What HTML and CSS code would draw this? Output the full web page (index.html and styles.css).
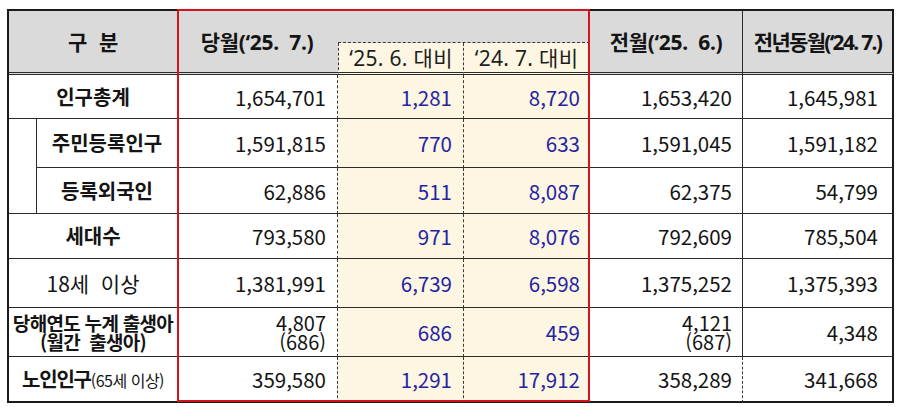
FILE: index.html
```html
<!DOCTYPE html>
<html lang="ko">
<head>
<meta charset="utf-8">
<title>인구 현황</title>
<link rel="stylesheet" href="styles.css">
</head>
<body>
<div class="wrap">
  <table class="stats">
    <colgroup>
      <col class="c-indent">
      <col class="c-label">
      <col class="c-cur">
      <col class="c-d">
      <col class="c-d">
      <col class="c-prev">
      <col class="c-yoy">
    </colgroup>
    <thead>
      <tr class="h1">
        <th colspan="2" rowspan="2" class="gubun">구<span class="sp"></span>분</th>
        <th rowspan="2" class="cur-h">당월(‘25.&nbsp; 7.)</th>
        <th colspan="2" class="blank"></th>
        <th rowspan="2" class="prev-h">전월(‘25.&nbsp; 6.)</th>
        <th rowspan="2" class="yoy-h">전년동월(‘24. 7.)</th>
      </tr>
      <tr class="h2">
        <th class="sub sub1">‘25. 6. 대비</th>
        <th class="sub sub2">‘24. 7. 대비</th>
      </tr>
    </thead>
    <tbody>
      <tr class="r1">
        <td colspan="2" class="label">인구총계</td>
        <td class="num cur">1,654,701</td>
        <td class="num d d1">1,281</td>
        <td class="num d d2">8,720</td>
        <td class="num prev">1,653,420</td>
        <td class="num yoy">1,645,981</td>
      </tr>
      <tr class="r2">
        <td rowspan="2" class="indent"></td>
        <td class="label">주민등록인구</td>
        <td class="num cur">1,591,815</td>
        <td class="num d d1">770</td>
        <td class="num d d2">633</td>
        <td class="num prev">1,591,045</td>
        <td class="num yoy">1,591,182</td>
      </tr>
      <tr class="r3">
        <td class="label">등록외국인</td>
        <td class="num cur">62,886</td>
        <td class="num d d1">511</td>
        <td class="num d d2">8,087</td>
        <td class="num prev">62,375</td>
        <td class="num yoy">54,799</td>
      </tr>
      <tr class="r4">
        <td colspan="2" class="label">세대수</td>
        <td class="num cur">793,580</td>
        <td class="num d d1">971</td>
        <td class="num d d2">8,076</td>
        <td class="num prev">792,609</td>
        <td class="num yoy">785,504</td>
      </tr>
      <tr class="r5">
        <td colspan="2" class="label light">18세&nbsp; 이상</td>
        <td class="num cur">1,381,991</td>
        <td class="num d d1">6,739</td>
        <td class="num d d2">6,598</td>
        <td class="num prev">1,375,252</td>
        <td class="num yoy">1,375,393</td>
      </tr>
      <tr class="r6">
        <td colspan="2" class="label births"><span class="ln">당해연도 누계 출생아</span><span class="ln">(월간&nbsp; 출생아)</span></td>
        <td class="num cur two"><span class="ln">4,807</span><span class="ln">(686)</span></td>
        <td class="num d d1">686</td>
        <td class="num d d2">459</td>
        <td class="num prev two"><span class="ln">4,121</span><span class="ln">(687)</span></td>
        <td class="num yoy">4,348</td>
      </tr>
      <tr class="r7">
        <td colspan="2" class="label elder">노인인구<span class="small">(65세 이상)</span></td>
        <td class="num cur">359,580</td>
        <td class="num d d1">1,291</td>
        <td class="num d d2">17,912</td>
        <td class="num prev dash">358,289</td>
        <td class="num yoy">341,668</td>
      </tr>
    </tbody>
  </table>
  <div class="redbox"></div>
</div>
</body>
</html>
```
FILE: styles.css
```css
html, body {
  margin: 0;
  padding: 0;
  background: #ffffff;
}

.wrap {
  position: relative;
  padding: 9px 0 0 7px;
  font-family: "Noto Sans CJK KR", "Noto Sans", sans-serif;
  color: #141414;
}

.stats {
  border-collapse: separate;
  border-spacing: 0;
  table-layout: fixed;
  width: 887px;
  border-top: 2px solid #1a1a1a;
  border-left: 2px solid #1a1a1a;
}

.c-indent { width: 28px; }
.c-label { width: 141px; }
.c-cur { width: 160px; }
.c-d { width: 126px; }
.c-prev { width: 153px; }
.c-yoy { width: 151px; }

.stats th,
.stats td {
  padding: 0;
  border-right: 1px solid #2b2b2b;
  border-bottom: 1px solid #2b2b2b;
  vertical-align: middle;
  line-height: 22px;
  font-size: 20.5px;
}

/* header */
.stats thead th {
  background: #dadada;
  font-family: "Noto Sans", "Noto Sans CJK KR", sans-serif;
  font-weight: 700;
  text-align: center;
  border-bottom: 3px double #2b2b2b;
  font-size: 21px;
  letter-spacing: -0.3px;
}

.h1 { height: 32px; }
.h2 { height: 32px; }

.gubun .sp {
  display: inline-block;
  width: 12px;
}

.stats thead th.cur-h {
  border-right: none;
  padding-right: 2px;
}

.stats thead th.blank {
  border-bottom: 1px dashed #3a3a3a;
}

.stats thead th.yoy-h {
  border-right: 2px solid #1a1a1a;
  letter-spacing: -1.7px;
}

.stats thead th.sub {
  background: #fcf6e3;
  font-weight: 400;
  color: #1e1e1e;
  letter-spacing: 0.3px;
  font-size: 21px;
}

.stats thead th.sub1 {
  border-left: 1px dashed #3a3a3a;
  border-right: 1px dashed #3a3a3a;
}

/* body */
.r1 { height: 44px; }
.r2 { height: 49px; }
.r3 { height: 46px; }
.r4 { height: 45px; }
.r5 { height: 49px; }
.r6 { height: 49px; }
.r7 { height: 46px; }

.label {
  text-align: center;
  font-weight: 700;
  letter-spacing: 0;
}

.stats td.label {
  font-size: 20px;
}

.stats td.label.light {
  font-weight: 400;
  font-size: 21px;
}

.stats td.label.births {
  font-size: 19px;
  font-weight: 700;
  letter-spacing: -0.7px;
}

.ln {
  display: block;
  line-height: 19px;
}

.stats td.label.elder {
  font-size: 20px;
  letter-spacing: -1.2px;
}

.label .small {
  font-size: 16px;
  font-weight: 400;
  letter-spacing: -0.5px;
}

.num {
  text-align: right;
  padding-right: 11px !important;
  font-weight: 400;
}

.stats td.two {
  font-size: 20px;
}

.num.cur {
  border-right: 1px dashed #3a3a3a;
}

.num.d {
  background: #fcf6e3;
  color: #2424a2;
}

.num.d1 {
  border-right: 1px dashed #3a3a3a;
}

.num.d2 {
  padding-right: 9px !important;
}

.num.prev {
  padding-right: 10px !important;
}

.num.prev.dash {
  border-right: 1px dashed #3a3a3a;
}

.num.yoy {
  border-right: 2px solid #1a1a1a;
  padding-right: 14px !important;
}

.stats .r7 td {
  border-bottom: 2px solid #1a1a1a;
}

.indent {
  background: #ffffff;
}

.redbox {
  position: absolute;
  left: 177px;
  top: 9px;
  width: 413px;
  height: 393px;
  border: 2px solid #d2141d;
  box-sizing: border-box;
  pointer-events: none;
}
```
